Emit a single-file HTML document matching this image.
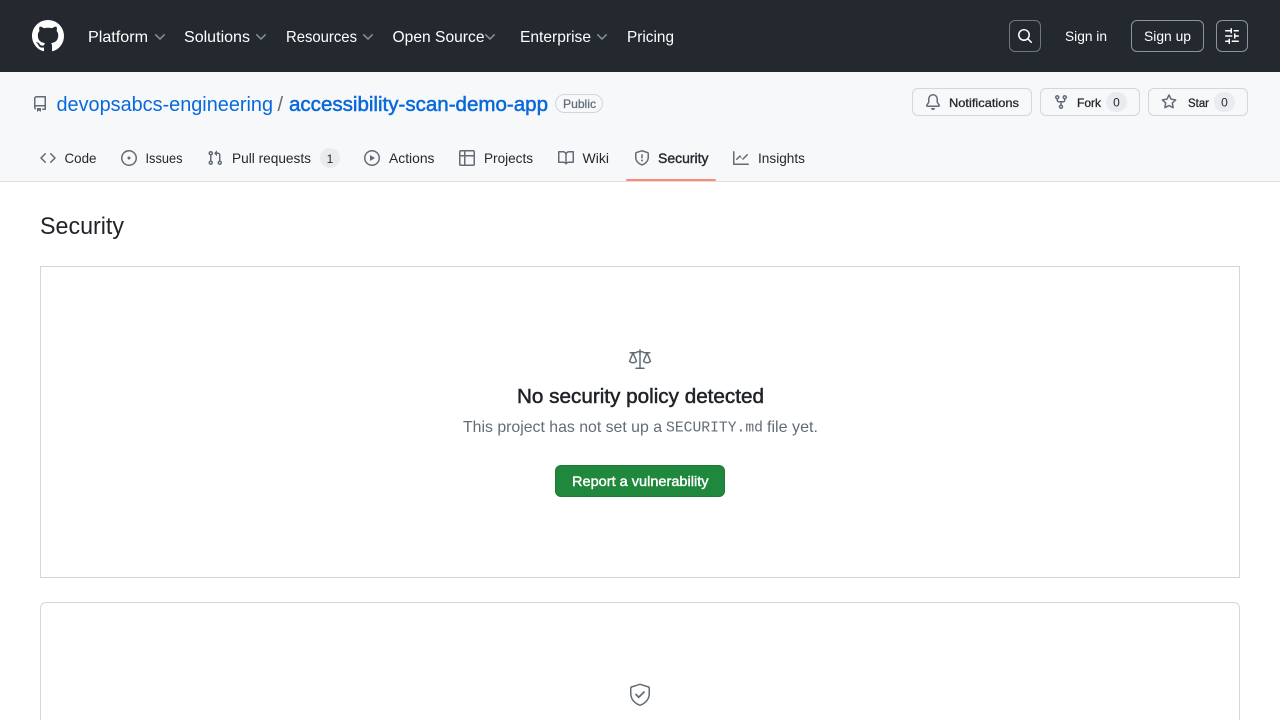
<!DOCTYPE html>
<html lang="en">
<head>
<meta charset="utf-8">
<title>Security</title>
<style>
html,body{margin:0;padding:0;width:1280px;height:720px;overflow:hidden;background:#fff}
body{position:relative;font-family:"Liberation Sans",sans-serif}
.a{position:absolute;box-sizing:border-box}
svg.t{position:absolute;left:0;top:0;width:1280px;height:720px}
text{font-family:"Liberation Sans",sans-serif;font-size:14px;fill:#1f2328}
.n{font-size:16px;fill:#fff}
.w{fill:#fff}
.tab{fill:#24292f}
.ic{fill:#636c76}
.btn{font-size:12px;fill:#24292f;stroke:#24292f;stroke-width:.3px}
.ct{font-size:12px;fill:#24292f;text-anchor:middle}
</style>
</head>
<body>
<div class="a" style="left:0;top:0;width:1280px;height:72px;background:#24292f"></div>
<div class="a" style="left:0;top:72px;width:1280px;height:110px;background:#f6f8fa;border-bottom:1px solid #d8dee4"></div>
<div class="a" style="left:626px;top:179px;width:90px;height:2px;background:#fd8c73;border-radius:1px"></div>

<div class="a" style="left:1009px;top:20px;width:32px;height:32px;border:1px solid #6e7681;border-radius:6px"></div>
<div class="a" style="left:1131px;top:20px;width:73px;height:32px;border:1px solid #8c959f;border-radius:6px"></div>
<div class="a" style="left:1216px;top:20px;width:32px;height:32px;border:1px solid #8c959f;border-radius:6px"></div>

<div class="a" style="left:555px;top:94px;width:48px;height:19px;border:1px solid #d0d7de;border-radius:10px"></div>
<div class="a" style="left:912px;top:88px;width:120px;height:28px;background:#f6f8fa;border:1px solid #d0d7de;border-radius:6px"></div>
<div class="a" style="left:1040px;top:88px;width:100px;height:28px;background:#f6f8fa;border:1px solid #d0d7de;border-radius:6px"></div>
<div class="a" style="left:1148px;top:88px;width:100px;height:28px;background:#f6f8fa;border:1px solid #d0d7de;border-radius:6px"></div>
<div class="a" style="left:1106px;top:92px;width:21px;height:20px;background:#e9ebee;border-radius:10px"></div>
<div class="a" style="left:1214px;top:92px;width:21px;height:20px;background:#e9ebee;border-radius:10px"></div>
<div class="a" style="left:320px;top:148px;width:20px;height:20px;background:#e9ebee;border-radius:10px"></div>

<div class="a" style="left:40px;top:266px;width:1200px;height:312px;border:1px solid #d0d7de"></div>
<div class="a" style="left:40px;top:602px;width:1200px;height:140px;border:1px solid #d0d7de;border-radius:6px"></div>
<div class="a" style="left:555px;top:465px;width:170px;height:32px;background:#1f883d;border:1px solid rgba(31,35,40,.15);border-radius:6px"></div>

<svg class="t" viewBox="0 0 1280 720" xmlns="http://www.w3.org/2000/svg">
<defs>
<path id="chev" d="M12.78 5.22a.749.749 0 0 1 0 1.06l-4.25 4.25a.749.749 0 0 1-1.06 0L3.22 6.28a.749.749 0 1 1 1.06-1.06L8 8.939l3.72-3.719a.749.749 0 0 1 1.06 0Z"/>
</defs>
<!-- Logo -->
<svg x="32" y="20" width="32" height="32" viewBox="0 0 16 16"><path fill="#fff" d="M8 0c4.42 0 8 3.58 8 8a8.013 8.013 0 0 1-5.45 7.59c-.4.08-.55-.17-.55-.38 0-.27.01-1.13.01-2.2 0-.75-.25-1.23-.54-1.48 1.78-.2 3.65-.88 3.65-3.95 0-.88-.31-1.59-.82-2.15.08-.2.36-1.02-.08-2.12 0 0-.67-.22-2.2.82-.64-.18-1.32-.27-2-.27-.68 0-1.36.09-2 .27-1.53-1.03-2.2-.82-2.2-.82-.44 1.1-.16 1.92-.08 2.12-.51.56-.82 1.28-.82 2.15 0 3.06 1.86 3.75 3.64 3.95-.23.2-.44.55-.51 1.07-.46.21-1.61.55-2.33-.66-.15-.24-.6-.83-1.23-.82-.67.01-.27.38.01.53.34.19.73.9.82 1.13.16.45.68 1.31 2.69.94 0 .67.01 1.3.01 1.49 0 .21-.15.45-.55.38A7.995 7.995 0 0 1 0 8c0-4.42 3.58-8 8-8Z"/></svg>

<!-- Top nav -->
<text class="n" x="88" y="42" textLength="60" lengthAdjust="spacingAndGlyphs">Platform</text>
<text class="n" x="184" y="42" textLength="66" lengthAdjust="spacingAndGlyphs">Solutions</text>
<text class="n" x="286" y="42" textLength="71" lengthAdjust="spacingAndGlyphs">Resources</text>
<text class="n" x="392.500" y="42" textLength="92" lengthAdjust="spacingAndGlyphs">Open Source</text>
<text class="n" x="520" y="42" textLength="71" lengthAdjust="spacingAndGlyphs">Enterprise</text>
<text class="n" x="627" y="42" textLength="47" lengthAdjust="spacingAndGlyphs">Pricing</text>
<g fill="#8b949e">
<use href="#chev" transform="translate(152 29)"/>
<use href="#chev" transform="translate(253 29)"/>
<use href="#chev" transform="translate(360 29)"/>
<use href="#chev" transform="translate(482 29)"/>
<use href="#chev" transform="translate(594 29)"/>
</g>

<!-- Header right -->
<svg x="1017" y="28" width="16" height="16" viewBox="0 0 16 16"><path fill="#fff" d="M10.68 11.74a6 6 0 0 1-7.922-8.982 6 6 0 0 1 8.982 7.922l3.04 3.04a.749.749 0 0 1-.326 1.275.749.749 0 0 1-.734-.215ZM11.5 7a4.499 4.499 0 1 0-8.997 0A4.499 4.499 0 0 0 11.5 7Z"/></svg>
<text class="w" x="1065" y="41" textLength="42" lengthAdjust="spacingAndGlyphs">Sign in</text>
<text class="w" x="1144" y="41" textLength="47" lengthAdjust="spacingAndGlyphs">Sign up</text>
<svg x="1224" y="28" width="16" height="16" viewBox="0 0 16 16"><path fill="#fff" d="M15 2.75a.75.75 0 0 1-.75.75h-4a.75.75 0 0 1 0-1.5h4a.75.75 0 0 1 .75.75Zm-8.5.75v1.25a.75.75 0 0 0 1.5 0v-4a.75.75 0 0 0-1.5 0V2H1.75a.75.75 0 0 0 0 1.5H6.500Zm1.250 5.250a.75.75 0 0 0 0-1.5h-6a.75.75 0 0 0 0 1.5h6ZM15 8a.75.75 0 0 1-.75.75H11.500V10a.75.75 0 1 1-1.5 0V6a.75.75 0 0 1 1.5 0v1.250h2.750A.75.75 0 0 1 15 8Zm-9 5.250v-2a.75.75 0 0 0-1.5 0v1.250H1.750a.75.75 0 0 0 0 1.5H4.500v1.250a.75.75 0 0 0 1.5 0v-2Zm9 0a.75.75 0 0 1-.75.75h-6a.75.75 0 0 1 0-1.5h6a.75.75 0 0 1 .75.75Z"/></svg>

<!-- Repo title -->
<svg x="32" y="96" width="16" height="16" viewBox="0 0 16 16"><path class="ic" d="M2 2.5A2.5 2.5 0 0 1 4.500 0h8.750a.75.75 0 0 1 .75.75v12.500a.75.75 0 0 1-.75.75h-2.500a.75.75 0 0 1 0-1.5h1.750v-2h-8a1 1 0 0 0-.714 1.700.75.75 0 1 1-1.072 1.050A2.495 2.495 0 0 1 2 11.500Zm10.500-1h-8a1 1 0 0 0-1 1v6.708A2.486 2.486 0 0 1 4.500 9h8ZM5 12.250a.25.25 0 0 1 .25-.25h3.500a.25.25 0 0 1 .25.25v3.250a.25.25 0 0 1-.4.2l-1.450-1.087a.249.249 0 0 0-.3 0L5.400 15.700a.25.25 0 0 1-.4-.2Z"/></svg>
<text x="56.500" y="111" style="font-size:20px;fill:#0969da" textLength="216.500" lengthAdjust="spacingAndGlyphs">devopsabcs-engineering</text>
<text x="277.500" y="111" style="font-size:20px;fill:#636c76">/</text>
<text x="289" y="111" style="font-size:20px;fill:#0969da;stroke:#0969da;stroke-width:.5px" textLength="259" lengthAdjust="spacingAndGlyphs">accessibility-scan-demo-app</text>
<text x="563" y="108" style="font-size:12px;fill:#636c76;stroke:#636c76;stroke-width:.25px" textLength="33" lengthAdjust="spacingAndGlyphs">Public</text>

<!-- Repo actions -->
<svg x="925" y="94" width="16" height="16" viewBox="0 0 16 16"><path class="ic" d="M8 16a2 2 0 0 0 1.985-1.75c.017-.137-.097-.25-.235-.25h-3.500c-.138 0-.252.113-.235.25A2 2 0 0 0 8 16ZM3 5a5 5 0 0 1 10 0v2.947c0 .05.015.098.042.139l1.703 2.555A1.519 1.519 0 0 1 13.482 13H2.518a1.516 1.516 0 0 1-1.263-2.360l1.703-2.554A.255.255 0 0 0 3 7.947Zm5-3.500A3.500 3.500 0 0 0 4.500 5v2.947c0 .346-.102.683-.294.970l-1.703 2.556a.017.017 0 0 0-.003.010l.001.006c0 .002.002.004.004.006l.006.004.007.001h10.964l.007-.001.006-.004.004-.006.001-.007a.017.017 0 0 0-.003-.010l-1.703-2.554a1.745 1.745 0 0 1-.294-.970V5A3.500 3.500 0 0 0 8 1.500Z"/></svg>
<text class="btn" x="949" y="107" textLength="70" lengthAdjust="spacingAndGlyphs">Notifications</text>
<svg x="1053" y="94" width="16" height="16" viewBox="0 0 16 16"><path class="ic" d="M5 5.372v.878c0 .414.336.75.75.75h4.500a.75.75 0 0 0 .75-.75v-.878a2.250 2.250 0 1 1 1.500 0v.878a2.250 2.250 0 0 1-2.250 2.250h-1.500v2.128a2.251 2.251 0 1 1-1.500 0V8.500h-1.500A2.250 2.250 0 0 1 3.500 6.250v-.878a2.250 2.250 0 1 1 1.500 0ZM5 3.250a.75.75 0 1 0-1.500 0 .75.75 0 0 0 1.500 0Zm6.750.75a.75.75 0 1 0 0-1.500.75.75 0 0 0 0 1.500Zm-3 8.750a.75.75 0 1 0-1.500 0 .75.75 0 0 0 1.500 0Z"/></svg>
<text class="btn" x="1077" y="107" textLength="24" lengthAdjust="spacingAndGlyphs">Fork</text>
<text class="ct" x="1116.500" y="106.500">0</text>
<svg x="1161" y="94" width="16" height="16" viewBox="0 0 16 16"><path class="ic" d="M8 .25a.75.75 0 0 1 .673.418l1.882 3.815 4.210.612a.75.75 0 0 1 .416 1.279l-3.046 2.970.719 4.192a.751.751 0 0 1-1.088.791L8 12.347l-3.766 1.980a.75.75 0 0 1-1.088-.79l.72-4.194L.818 6.374a.75.75 0 0 1 .416-1.280l4.210-.611L7.327.668A.75.75 0 0 1 8 .25Zm0 2.445L6.615 5.500a.75.75 0 0 1-.564.41l-3.097.45 2.240 2.184a.75.75 0 0 1 .216.664l-.528 3.084 2.769-1.456a.75.75 0 0 1 .698 0l2.770 1.456-.53-3.084a.75.75 0 0 1 .216-.664l2.240-2.183-3.096-.45a.75.75 0 0 1-.564-.41L8 2.694Z"/></svg>
<text class="btn" x="1188" y="107" textLength="21" lengthAdjust="spacingAndGlyphs">Star</text>
<text class="ct" x="1224.500" y="106.500">0</text>

<!-- Tabs -->
<svg x="40" y="150" width="16" height="16" viewBox="0 0 16 16"><path class="ic" d="m11.280 3.220 4.250 4.250a.75.75 0 0 1 0 1.060l-4.250 4.250a.749.749 0 0 1-1.275-.326.749.749 0 0 1 .215-.734L13.940 8l-3.720-3.720a.749.749 0 0 1 .326-1.275.749.749 0 0 1 .734.215Zm-6.560 0a.751.751 0 0 1 1.042.018.751.751 0 0 1 .018 1.042L2.060 8l3.720 3.720a.749.749 0 0 1-.326 1.275.749.749 0 0 1-.734-.215L.47 8.530a.75.75 0 0 1 0-1.060Z"/></svg>
<text class="tab" x="64.500" y="163" textLength="32" lengthAdjust="spacingAndGlyphs">Code</text>
<svg x="121" y="150" width="16" height="16" viewBox="0 0 16 16"><path class="ic" d="M8 9.500a1.500 1.500 0 1 0 0-3 1.500 1.500 0 0 0 0 3Z"/><path class="ic" d="M8 0a8 8 0 1 1 0 16A8 8 0 0 1 8 0ZM1.500 8a6.500 6.500 0 1 0 13 0 6.500 6.500 0 0 0-13 0Z"/></svg>
<text class="tab" x="145.500" y="163" textLength="37" lengthAdjust="spacingAndGlyphs">Issues</text>
<svg x="207" y="150" width="16" height="16" viewBox="0 0 16 16"><path class="ic" d="M1.500 3.250a2.250 2.250 0 1 1 3 2.122v5.256a2.251 2.251 0 1 1-1.500 0V5.372A2.250 2.250 0 0 1 1.500 3.250Zm5.677-.177L9.573.677A.25.25 0 0 1 10 .854V2.500h1A2.500 2.500 0 0 1 13.500 5v5.628a2.251 2.251 0 1 1-1.500 0V5a1 1 0 0 0-1-1h-1v1.646a.25.25 0 0 1-.427.177L7.177 3.427a.25.25 0 0 1 0-.354ZM3.750 2.500a.75.75 0 1 0 0 1.500.75.75 0 0 0 0-1.500Zm0 9.500a.75.75 0 1 0 0 1.500.75.75 0 0 0 0-1.500Zm8.250.75a.75.75 0 1 0 1.500 0 .75.75 0 0 0-1.500 0Z"/></svg>
<text class="tab" x="232" y="163" textLength="79" lengthAdjust="spacingAndGlyphs">Pull requests</text>
<text class="ct" x="330" y="163">1</text>
<svg x="364" y="150" width="16" height="16" viewBox="0 0 16 16"><path class="ic" d="M8 0a8 8 0 1 1 0 16A8 8 0 0 1 8 0ZM1.500 8a6.500 6.500 0 1 0 13 0 6.500 6.500 0 0 0-13 0Zm4.879-2.773 4.264 2.559a.25.25 0 0 1 0 .428l-4.264 2.559A.25.25 0 0 1 6 10.559V5.442a.25.25 0 0 1 .379-.215Z"/></svg>
<text class="tab" x="389" y="163" textLength="45.500" lengthAdjust="spacingAndGlyphs">Actions</text>
<svg x="459" y="150" width="16" height="16" viewBox="0 0 16 16"><path class="ic" d="M0 1.750C0 .784.784 0 1.750 0h12.500C15.216 0 16 .784 16 1.750v12.500A1.750 1.750 0 0 1 14.250 16H1.750A1.750 1.750 0 0 1 0 14.250ZM6.500 6.500v8h7.750a.25.25 0 0 0 .25-.25V6.500Zm8-1.500V1.750a.25.25 0 0 0-.25-.25H6.500V5Zm-13 1.500v7.750c0 .138.112.25.25.25H5v-8ZM5 5V1.500H1.750a.25.25 0 0 0-.25.25V5Z"/></svg>
<text class="tab" x="484" y="163" textLength="49" lengthAdjust="spacingAndGlyphs">Projects</text>
<svg x="558" y="150" width="16" height="16" viewBox="0 0 16 16"><path class="ic" d="M0 1.750A.75.75 0 0 1 .75 1h4.253c1.227 0 2.317.59 3 1.501A3.743 3.743 0 0 1 11.006 1h4.245a.75.75 0 0 1 .75.75v10.500a.75.75 0 0 1-.75.75h-4.507a2.250 2.250 0 0 0-1.591.659l-.622.621a.75.75 0 0 1-1.060 0l-.622-.621A2.250 2.250 0 0 0 5.258 13H.75a.75.75 0 0 1-.75-.75Zm7.251 10.324.004-5.073-.002-2.253A2.250 2.250 0 0 0 5.003 2.500H1.500v9h3.757a3.750 3.750 0 0 1 1.994.574ZM8.755 4.750l-.004 7.322a3.752 3.752 0 0 1 1.992-.572H14.500v-9h-3.495a2.250 2.250 0 0 0-2.250 2.250Z"/></svg>
<text class="tab" x="582.500" y="163" textLength="26.500" lengthAdjust="spacingAndGlyphs">Wiki</text>
<svg x="634" y="150" width="16" height="16" viewBox="0 0 16 16"><path class="ic" d="M7.467.133a1.748 1.748 0 0 1 1.066 0l5.250 1.680A1.750 1.750 0 0 1 15 3.480V7c0 1.566-.32 3.182-1.303 4.682-.983 1.498-2.585 2.813-5.032 3.855a1.697 1.697 0 0 1-1.330 0c-2.447-1.042-4.049-2.357-5.032-3.855C1.320 10.182 1 8.566 1 7V3.480a1.750 1.750 0 0 1 1.217-1.667Zm.61 1.429a.25.25 0 0 0-.153 0l-5.250 1.680a.25.25 0 0 0-.174.238V7c0 1.358.275 2.666 1.057 3.860.784 1.194 2.121 2.340 4.366 3.297a.196.196 0 0 0 .154 0c2.245-.956 3.582-2.104 4.366-3.298C13.225 9.666 13.500 8.360 13.500 7V3.480a.251.251 0 0 0-.174-.237l-5.250-1.680ZM8.750 4.750v3a.75.75 0 0 1-1.500 0v-3a.75.75 0 0 1 1.500 0ZM9 10.500a1 1 0 1 1-2 0 1 1 0 0 1 2 0Z"/></svg>
<text class="tab" x="658" y="163" style="stroke:#24292f;stroke-width:.4px" textLength="50.500" lengthAdjust="spacingAndGlyphs">Security</text>
<svg x="733" y="150" width="16" height="16" viewBox="0 0 16 16"><path class="ic" d="M1.500 1.750V13.500h13.750a.75.75 0 0 1 0 1.500H.75a.75.75 0 0 1-.75-.75V1.750a.75.75 0 0 1 1.500 0Zm14.280 2.530-5.250 5.250a.75.75 0 0 1-1.060 0L7 7.060 4.280 9.780a.751.751 0 0 1-1.042-.018.751.751 0 0 1-.018-1.042l3.250-3.250a.75.75 0 0 1 1.060 0L9 8.939l4.720-4.719a.751.751 0 0 1 1.042.018.751.751 0 0 1 .018 1.042Z"/></svg>
<text class="tab" x="758" y="163" textLength="47" lengthAdjust="spacingAndGlyphs">Insights</text>

<!-- Content -->
<text x="40" y="234" style="font-size:24px" textLength="84" lengthAdjust="spacingAndGlyphs">Security</text>

<svg x="628" y="347" width="24" height="24" viewBox="0 0 24 24"><g fill="none" stroke="#636c76" stroke-width="1.500" stroke-linecap="round" stroke-linejoin="round"><path d="M12 2.750V21.250M8 21.250H16"/><path d="M2.250 5.750H7.500L9.750 4.750H14.250L16.500 5.750H21.750"/><path d="M5 6 1.500 14.250C2.500 15.250 3.800 15.750 5 15.750S7.500 15.250 8.500 14.250Z"/><path d="M19 6 15.500 14.250C16.500 15.250 17.800 15.750 19 15.750S21.500 15.250 22.500 14.250Z"/></g></svg>
<text x="517" y="403" style="font-size:20px;stroke:#1f2328;stroke-width:.5px" textLength="247" lengthAdjust="spacingAndGlyphs">No security policy detected</text>
<text x="463" y="432" style="font-size:16px;fill:#636c76" textLength="199" lengthAdjust="spacingAndGlyphs">This project has not set up a</text>
<text x="666" y="431.500" style="font-family:'Liberation Mono',monospace;font-size:14.400px;fill:#636c76" textLength="97" lengthAdjust="spacingAndGlyphs">SECURITY.md</text>
<text x="767" y="432" style="font-size:16px;fill:#636c76" textLength="51" lengthAdjust="spacingAndGlyphs">file yet.</text>
<text class="w" x="572" y="486" style="stroke:#fff;stroke-width:.4px" textLength="136.500" lengthAdjust="spacingAndGlyphs">Report a vulnerability</text>

<svg x="628" y="682.500" width="24" height="24" viewBox="0 0 24 24"><g fill="none" stroke="#636c76" stroke-width="1.500" stroke-linecap="round" stroke-linejoin="round"><path d="M11.400 1.950 3.400 4.500C3 4.650 2.750 5 2.750 5.400V11C2.750 16 5.500 20 11.300 22.600C11.750 22.800 12.250 22.800 12.700 22.600C18.500 20 21.250 16 21.250 11V5.400C21.250 5 21 4.650 20.600 4.500L12.600 1.950C12.200 1.850 11.800 1.850 11.400 1.950Z"/><path d="M8 12 10.750 14.750 16 9.500" stroke-width="1.750"/></g></svg>
</svg>
</body>
</html>
